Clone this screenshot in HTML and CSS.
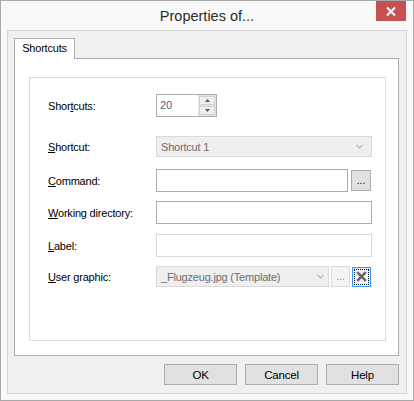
FILE: index.html
```html
<!DOCTYPE html>
<html>
<head>
<meta charset="utf-8">
<link rel="stylesheet" href="styles.css">
</head>
<body>
<div class="window">
  <div class="titlebar">
    <span></span>
    <div class="title">Properties of...</div>
    <button class="close" aria-label="Close">
      <svg width="10" height="9" viewBox="0 0 10 9"><path d="M1 0.5 L9 8.5 M9 0.5 L1 8.5" stroke="#fff" stroke-width="2" fill="none"/></svg>
    </button>
  </div>
  <div class="client">
    <div class="tabs"><div class="tab">Shortcuts</div></div>
    <div class="panel">
      <div class="group">
        <div class="row r1">
          <span class="lbl">Shor<u>t</u>cuts:</span>
          <div class="spinner">
            <span class="spin-val">20</span>
            <div class="spin-btns">
              <span class="spin-b"><svg width="5" height="3" viewBox="0 0 5 3"><path d="M0 3 L2.5 0 L5 3 Z" fill="#5a5a5a"/></svg></span>
              <span class="spin-b"><svg width="5" height="3" viewBox="0 0 5 3"><path d="M0 0 L2.5 3 L5 0 Z" fill="#5a5a5a"/></svg></span>
            </div>
          </div>
        </div>
        <div class="row r2">
          <span class="lbl"><u>S</u>hortcut:</span>
          <div class="combo dis full"><span>Shortcut 1</span><svg class="chev" width="7" height="5" viewBox="0 0 7 5"><path d="M0.5 0.8 L3.5 3.8 L6.5 0.8" stroke="#b4b4b4" stroke-width="1.2" fill="none"/></svg></div>
        </div>
        <div class="row r3">
          <span class="lbl"><u>C</u>ommand:</span>
          <div class="ctrls">
            <div class="field cmd"></div>
            <button class="small">...</button>
          </div>
        </div>
        <div class="row r4">
          <span class="lbl"><u>W</u>orking directory:</span>
          <div class="field"></div>
        </div>
        <div class="row r5">
          <span class="lbl"><u>L</u>abel:</span>
          <div class="field dis-field"></div>
        </div>
        <div class="row r6">
          <span class="lbl"><u>U</u>ser graphic:</span>
          <div class="ctrls">
            <div class="combo dis ug"><span>_Flugzeug.jpg (Template)</span><svg class="chev" width="7" height="5" viewBox="0 0 7 5"><path d="M0.5 0.8 L3.5 3.8 L6.5 0.8" stroke="#b4b4b4" stroke-width="1.2" fill="none"/></svg></div>
            <button class="small dis-btn">...</button>
            <button class="xbtn" aria-label="Remove"><span class="focus"><svg width="11" height="11" viewBox="0 0 11 11"><path d="M1.2 1.2 L9.8 9.8 M9.8 1.2 L1.2 9.8" stroke="#666" stroke-width="2.6" fill="none"/></svg></span></button>
          </div>
        </div>
      </div>
    </div>
    <div class="buttons">
      <button class="btn">OK</button>
      <button class="btn">Cancel</button>
      <button class="btn">Help</button>
    </div>
  </div>
</div>
</body>
</html>
```

FILE: styles.css
```css
html, body {
  margin: 0;
  padding: 0;
  background: #f8f8f8;
}
body {
  font-family: "Liberation Sans", Arial, sans-serif;
  font-size: 11px;
  letter-spacing: -0.2px;
  color: #000;
}
button {
  font: inherit;
  letter-spacing: inherit;
  color: inherit;
  margin: 0;
  padding: 0;
  appearance: none;
  -webkit-appearance: none;
  box-sizing: border-box;
}
.window {
  width: 414px;
  height: 401px;
  box-sizing: border-box;
  border: 1px solid #a9a9a9;
  background: #f9f9f9;
  display: flex;
  flex-direction: column;
}
.titlebar {
  height: 29px;
  flex: none;
  display: grid;
  grid-template-columns: 1fr auto 1fr;
  align-items: center;
}
.title {
  font-size: 14.5px;
  letter-spacing: 0;
  color: #2b2b2b;
  padding-top: 1px;
}
.close {
  justify-self: end;
  align-self: start;
  width: 30px;
  height: 20px;
  margin-right: 7px;
  border: 0;
  background: #c75050;
  display: flex;
  align-items: center;
  justify-content: center;
}
.client {
  flex: 1;
  margin: 0 6px 6px 6px;
  border: 1px solid #d4d4d4;
  background: #f0f0f0;
  padding: 7px 7px 8px 6px;
  display: flex;
  flex-direction: column;
}
.tabs {
  display: flex;
  height: 20px;
  flex: none;
}
.tab {
  position: relative;
  z-index: 1;
  box-sizing: border-box;
  width: 61px;
  height: 21px;
  border: 1px solid #adadad;
  border-bottom: 0;
  background: #fff;
  text-align: center;
  line-height: 19px;
}
.panel {
  box-sizing: border-box;
  height: 298px;
  flex: none;
  border: 1px solid #adadad;
  background: #fff;
  padding: 18px 12px 14px 14px;
}
.group {
  box-sizing: border-box;
  height: 264px;
  border: 1px solid #dcdcdc;
  padding: 16px 13px 0 18px;
}
.row {
  display: grid;
  grid-template-columns: 108px 216px;
  height: 23px;
  align-items: center;
}
.r2 { margin-top: 18px; }
.r3 { margin-top: 11px; }
.r4 { margin-top: 9px; }
.r5 { margin-top: 10px; }
.r6 { margin-top: 8px; }
.lbl u {
  text-decoration-thickness: 1px;
  text-underline-offset: 1px;
}
.spinner {
  box-sizing: border-box;
  width: 61px;
  height: 23px;
  border: 1px solid #ababab;
  display: flex;
  background: #fff;
}
.spin-val {
  flex: 1;
  padding-left: 3px;
  line-height: 21px;
  color: #56627a;
}
.spin-btns {
  width: 18px;
  background: #e4e4e4;
  display: flex;
  flex-direction: column;
  gap: 1px;
  padding: 1px;
  box-sizing: border-box;
}
.spin-b {
  flex: 1;
  border: 1px solid #d2d2d2;
  background: #efefef;
  display: flex;
  align-items: center;
  justify-content: center;
}
.combo {
  box-sizing: border-box;
  height: 21px;
  display: flex;
  align-items: center;
  justify-content: space-between;
  padding-left: 4px;
}
.combo.dis {
  border: 1px solid #d9d9d9;
  background: #efefef;
  color: #6d6d6d;
}
.combo.full { width: 216px; padding-right: 8px; }
.combo.ug { width: 173px; padding-right: 4px; }
.field {
  box-sizing: border-box;
  height: 23px;
  border: 1px solid #ababab;
  background: #fff;
}
.field.dis-field {
  border-color: #d9d9d9;
}
.ctrls {
  display: flex;
  align-items: center;
  height: 23px;
}
.field.cmd {
  width: 192px;
  margin-right: 3px;
}
.small {
  width: 20px;
  height: 21px;
  border: 1px solid #adadad;
  background: #e1e1e1;
  line-height: 17px;
  text-align: center;
  letter-spacing: 0;
  font-size: 10px;
}
.small.dis-btn {
  width: 19px;
  margin-left: 2px;
  border-color: #d9d9d9;
  background: #f4f4f4;
  color: #8a8a8a;
}
.xbtn {
  width: 19px;
  height: 20px;
  margin-left: 2px;
  border: 1px solid #3399ff;
  background: #eef4fa;
  padding: 1px;
}
.focus {
  display: flex;
  box-sizing: border-box;
  width: 100%;
  height: 100%;
  border: 1px dotted #000;
  align-items: center;
  justify-content: center;
}
.buttons {
  display: flex;
  justify-content: flex-end;
  gap: 8px;
  margin-top: 8px;
}
.btn {
  width: 73px;
  height: 21px;
  border: 1px solid #adadad;
  background: #e1e1e1;
  text-align: center;
  font-size: 11.5px;
}
```
